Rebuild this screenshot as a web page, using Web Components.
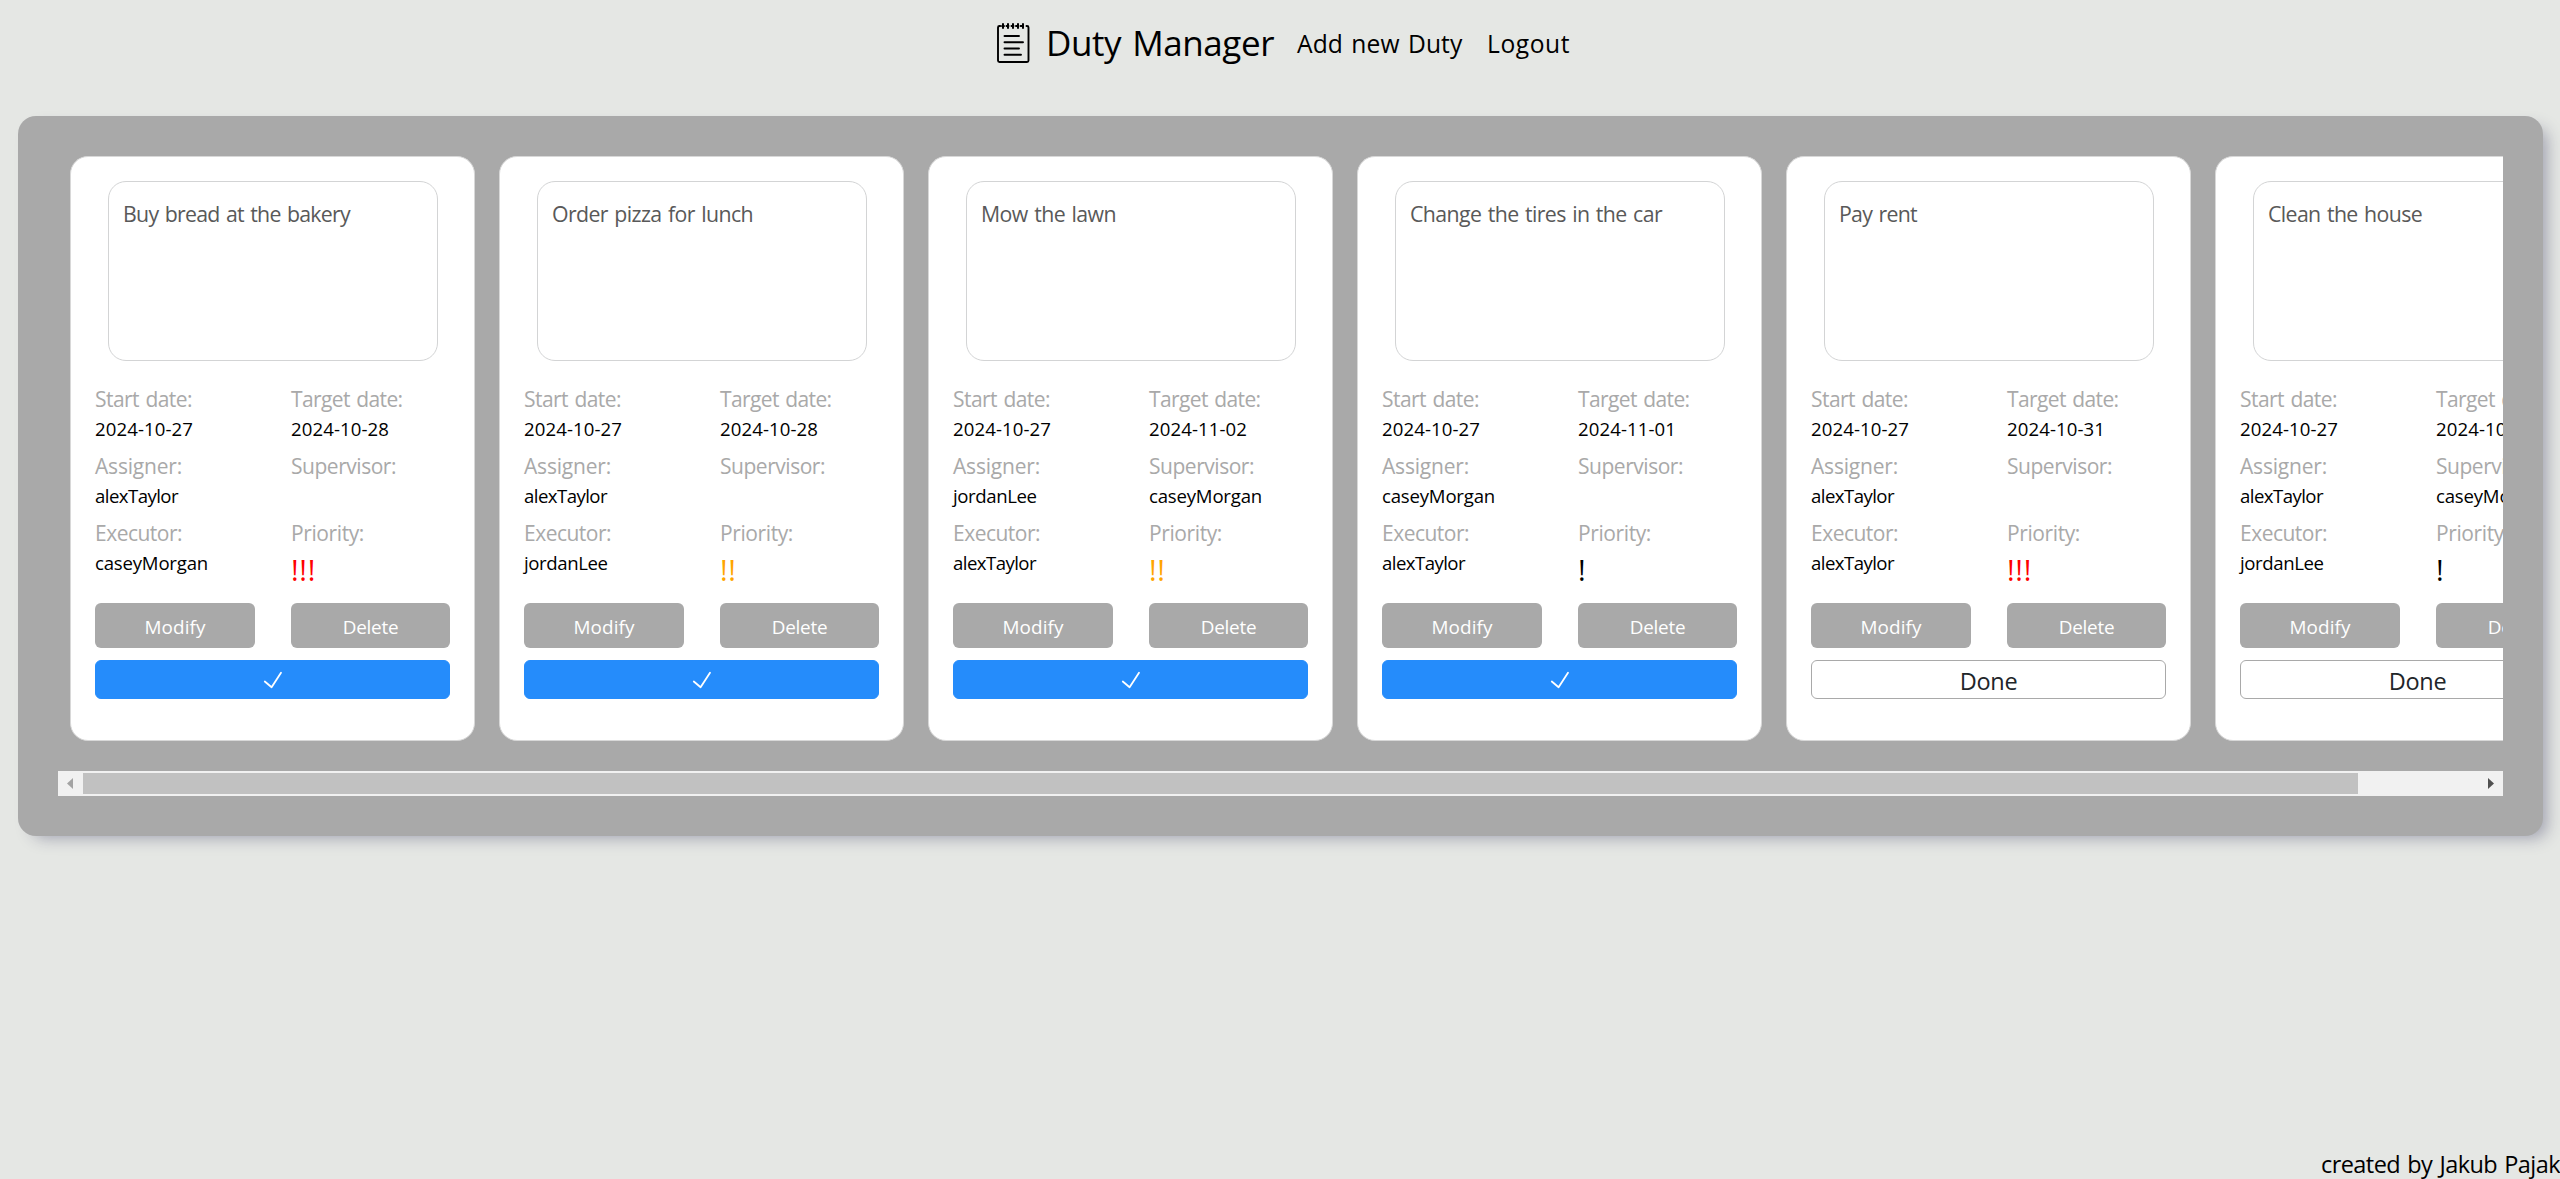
<!DOCTYPE html>
<html lang="en"><head><meta charset="utf-8"><title>Duty Manager</title>
<style>
html,body{margin:0;height:100%}
body{background:#e5e7e4;font-family:"Open Sans","Noto Sans",sans-serif;color:#000;overflow:hidden}
</style></head><body>
<duty-app></duty-app>
<script>
const define=(name,html,init)=>customElements.define(name,class extends HTMLElement{
  constructor(){super();this.attachShadow({mode:'open'}).innerHTML=html(this);}
  connectedCallback(){if(init)init(this);}
});

/* A single line of text tracked so that it fills a given ink width. */
define('fit-text',e=>`<style>:host{display:inline-block;white-space:nowrap}span{display:inline-block;word-spacing:.07em}</style><span>${e.getAttribute('text')}</span>`,e=>{
  const s=e.shadowRoot.querySelector('span'),t=e.getAttribute('text'),w=+e.getAttribute('w');
  if(w)s.style.letterSpacing=((w-s.getBoundingClientRect().width)/t.length)+'px';
});

const W={'Buy bread at the bakery':227,'Order pizza for lunch':201,'Mow the lawn':135,'Change the tires in the car':252,'Pay rent':78,'Clean the house':154,
'Start date:':97,'Target date:':111.5,'Assigner:':87,'Supervisor:':105,'Executor:':87,'Priority:':73,
alexTaylor:83,jordanLee:83.5,caseyMorgan:113,Modify:61,Delete:55.5,Done:57.5,'!':8.3,'!!':16.6,'!!!':25};
const T=t=>t?`<fit-text text="${t}" w="${W[t]||98}"></fit-text>`:'';

define('duty-field',e=>`<style>
:host{display:block;height:67px}
.l{height:31px;line-height:31px;font-size:21px;color:#a9a9a9}
.v{height:28px;line-height:28px;font-size:18.6px;white-space:nowrap}
.p{height:36px;line-height:42px;font-size:29px}
</style><div class="l">${T(e.getAttribute('label'))}</div><div class="${e.hasAttribute('color')?'p':'v'}" style="color:${e.getAttribute('color')||'#000'}">${T(e.getAttribute('value'))}</div>`);

define('duty-card',e=>{
 const [title,start,target,assigner,supervisor,executor,prio,done]=e.getAttribute('data').split('|');
 const f=(l,v,c)=>`<duty-field label="${l}:" value="${v}" ${c?`color="${c}"`:''}></duty-field>`;
 return `<style>
:host{display:flex;flex-direction:column;box-sizing:border-box;flex:none;width:405px;height:585px;background:#fff;border:1px solid #d8d8d8;border-radius:18px;padding:24px}
.desc{box-sizing:border-box;width:330px;height:180px;margin-left:13px;border:1px solid #d3d4d5;border-radius:18px;padding:16px 14px;font-size:21.3px;line-height:32px;color:#595959}
.grid{display:grid;grid-template-columns:160px 159px;column-gap:36px;margin-top:23px;height:201px}
.row{display:flex;gap:36px;margin-top:18px}
button{font:inherit;box-sizing:border-box;border:0;padding:0;margin:0;border-radius:6px;display:flex;align-items:center;justify-content:center}
.b{background:#a9a9a9;color:#fff;height:45px;width:160px;font-size:18.9px;line-height:24px;padding-top:3px}
.b+.b{width:159px}
.d{width:355px;height:39px;margin-top:12px;background:#fff;border:1px solid #a9a9a9;font-size:23.5px;line-height:34px;padding-top:2px;color:#212529}
.d.on{background:#258cfb;border-color:#258cfb;padding:1px 0 0}
svg{display:block}
</style>
<div class="desc">${T(title)}</div>
<div class="grid">${f('Start date',start)}${f('Target date',target)}${f('Assigner',assigner)}${f('Supervisor',supervisor)}${f('Executor',executor)}${f('Priority','!'.repeat(prio),['','#000','orange','red'][prio])}</div>
<div class="row"><button class="b">${T('Modify')}</button><button class="b">${T('Delete')}</button></div>
<button class="d ${done?'on':''}">${done?'<svg width="20" height="20" viewBox="0 0 20 20" fill="none" stroke="#fff" stroke-width="1.8" stroke-linecap="round" stroke-linejoin="round"><path d="M1.800 11.500 8.600 17.200 18 2.800"/></svg>':T('Done')}</button>`});

define('scroll-rail',()=>`<style>
:host{display:flex;align-items:center;height:25px;background:#f1f1f1}
.a{width:25px;display:flex;justify-content:center;flex:none}
.t{width:2275px;height:21px;background:#c1c1c1}
.s{flex:1}svg{display:block}
</style><span class="a"><svg width="25" height="25"><path d="M15 7v11l-6-5.500z" fill="#a3a3a3"/></svg></span><span class="t"></span><span class="s"></span><span class="a"><svg width="25" height="25"><path d="M10 7v11l6-5.500z" fill="#505050"/></svg></span>`);

define('note-icon',()=>`<style>:host{display:block}svg{display:block}</style>
<svg width="36" height="42" viewBox="0 0 36 42" fill="none" stroke="#000" stroke-width="1.900" stroke-linecap="round"><path d="M4.200 4H3.500Q2 4 2 5.500V38.500Q2 40 3.500 40H31Q32.500 40 32.500 38.500V5.500Q32.500 4 31 4H30.500M8.500 14H23M8.500 20.300H27M8.500 26.500H23M8.500 32.700H25"/><path stroke-width="2" d="M6 4H8M10.500 4H12.500M15.500 4H17.500M20 4H22M24.500 4H27M7 2V6M12 2V6M17 2V6M22 2V6M27 2V6"/></svg>`);

define('duty-nav',()=>`<style>
:host{display:flex;height:116px;padding-left:996px;align-items:flex-start}
note-icon{margin:22px 14px 0 0}
.h{font-size:35px;line-height:48px;margin-top:19px;width:251px}
.n{font-size:24.600px;line-height:34px;margin-top:27px;width:190px}
</style><note-icon></note-icon><div class="h"><fit-text text="Duty Manager" w="228"></fit-text></div><div class="n"><fit-text text="Add new Duty" w="165.500"></fit-text></div><div class="n"><fit-text text="Logout" w="83"></fit-text></div>`);

define('duty-app',()=>`<style>
:host{display:flex;flex-direction:column;height:1179px}
main{box-sizing:border-box;width:2525px;height:720px;margin-left:18px;background:#a9a9a9;border-radius:18px;padding:40px;box-shadow:9px 7px 16px -5px rgba(50,50,93,.38)}
.list{display:flex;gap:24px;padding-left:12px;height:615px;overflow:hidden}
footer{margin-top:auto;align-self:flex-end;font-size:23.500px;line-height:34px;height:32px}
</style><duty-nav></duty-nav><main><div class="list">${[
'Buy bread at the bakery|2024-10-27|2024-10-28|alexTaylor||caseyMorgan|3|1',
'Order pizza for lunch|2024-10-27|2024-10-28|alexTaylor||jordanLee|2|1',
'Mow the lawn|2024-10-27|2024-11-02|jordanLee|caseyMorgan|alexTaylor|2|1',
'Change the tires in the car|2024-10-27|2024-11-01|caseyMorgan||alexTaylor|1|1',
'Pay rent|2024-10-27|2024-10-31|alexTaylor||alexTaylor|3|',
'Clean the house|2024-10-27|2024-10-30|alexTaylor|caseyMorgan|jordanLee|1|'
].map(d=>`<duty-card data="${d}"></duty-card>`).join('')}</div><scroll-rail></scroll-rail></main>
<footer><fit-text text="created by Jakub Pajak" w="239"></fit-text></footer>`);
</script></body></html>
